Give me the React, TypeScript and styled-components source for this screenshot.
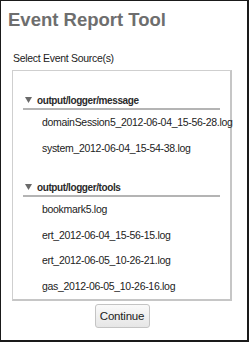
import styled, { createGlobalStyle } from "styled-components";

const GlobalStyle = createGlobalStyle`
    html, body {
        margin: 0;
        padding: 0;
        background: #ffffff;
    }
`;

const Frame = styled.div`
    box-sizing: border-box;
    width: 249px;
    height: 342px;
    border: 1px solid #1a1a1a;
    border-right-width: 2px;
    border-bottom-width: 2px;
    font-family: "Liberation Sans", Arial, sans-serif;
    display: flex;
    flex-direction: column;
`;

const Title = styled.h1`
    margin: 0;
    padding: 8px 0 0 7px;
    font-size: 18.5px;
    line-height: 22px;
    font-weight: 700;
    color: #6e6e6e;
`;

const Label = styled.div`
    margin: 21px 0 0 12px;
    font-size: 10.5px;
    letter-spacing: -0.3px;
    line-height: 13px;
    color: #222222;
`;

const ListBox = styled.div`
    box-sizing: border-box;
    margin: 5px 15px 0 11px;
    height: 231px;
    border: 1px solid #cfcfcf;
    border-right: 2px solid #c6c6c6;
    border-bottom: 2px solid #c6c6c6;
    padding: 21px 10px 0 10px;
`;

const Group = styled.div`
    margin-bottom: 18px;
`;

const GroupHeader = styled.div`
    display: flex;
    align-items: center;
    gap: 5px;
    height: 16px;
    padding-left: 2px;
    border-bottom: 2px solid #b4b4b4;
    font-size: 10px;
    letter-spacing: -0.4px;
    font-weight: 700;
    color: #2a2a2a;
`;

const Arrow = styled.svg`
    width: 7px;
    height: 6px;
    flex: none;
`;

const Item = styled.div`
    height: 25.5px;
    line-height: 25.5px;
    padding-left: 19px;
    font-size: 10.5px;
    letter-spacing: -0.3px;
    color: #222222;
    white-space: nowrap;

    &:first-of-type {
        margin-top: -1px;
    }
`;

const Footer = styled.div`
    display: flex;
    justify-content: center;
    padding: 3px 4px 0 0;
`;

const Button = styled.button`
    box-sizing: border-box;
    width: 55px;
    height: 24px;
    padding: 0;
    border: 1px solid #c4c4c4;
    border-radius: 3px;
    background: linear-gradient(#fafafa, #e6e6e6);
    font-family: "Liberation Sans", Arial, sans-serif;
    font-size: 11.5px;
    letter-spacing: -0.2px;
    color: #222222;
`;

const groups = [
    {
        name: "output/logger/message",
        files: [
            "domainSession5_2012-06-04_15-56-28.log",
            "system_2012-06-04_15-54-38.log",
        ],
    },
    {
        name: "output/logger/tools",
        files: [
            "bookmark5.log",
            "ert_2012-06-04_15-56-15.log",
            "ert_2012-06-05_10-26-21.log",
            "gas_2012-06-05_10-26-16.log",
        ],
    },
];

const App = () => {
    return (
        <>
            <GlobalStyle />
            <Frame>
                <Title>Event Report Tool</Title>
                <Label>Select Event Source(s)</Label>
                <ListBox>
                    {groups.map((group) => (
                        <Group key={group.name}>
                            <GroupHeader>
                                <Arrow viewBox="0 0 7 6">
                                    <path d="M0 0 H7 L3.5 6 Z" fill="#6a6a6a" />
                                </Arrow>
                                {group.name}
                            </GroupHeader>
                            {group.files.map((file) => (
                                <Item key={file}>{file}</Item>
                            ))}
                        </Group>
                    ))}
                </ListBox>
                <Footer>
                    <Button>Continue</Button>
                </Footer>
            </Frame>
        </>
    );
};

export default App;
